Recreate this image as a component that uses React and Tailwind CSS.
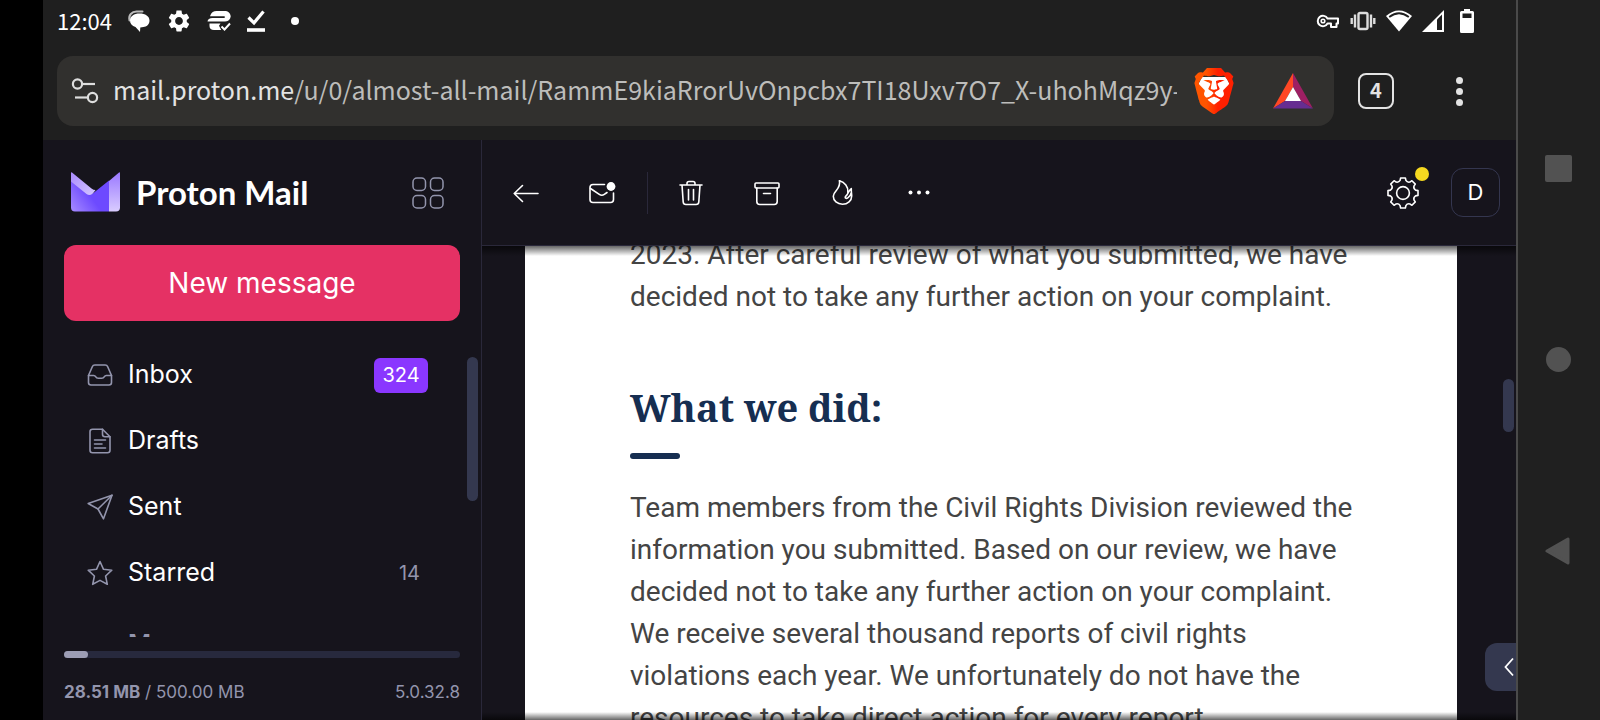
// Webmail conversation view inside a landscape mobile browser
import { SiBrave } from 'react-icons/si';

/* ---------- Status bar icons ---------- */

const ChatIcon = () => (
    <svg width="24" height="24" viewBox="0 0 24 24" fill="none">
        <path d="M2.500 11.500C1.200 6 5 2.600 9.500 2.600h6" stroke="#bbb" strokeWidth="2" strokeLinecap="round" />
        <path d="M12.500 4.500c5.800 0 10 2.700 10 7s-3 6-6 6.600l-3.200.4-.3 4.500-4.500-5C5 17 3 14.800 3 11.500c0-4.300 4-7 9.500-7z" fill="#fff" />
    </svg>
);

const CogFilledIcon = () => (
    <svg width="26" height="26" viewBox="0 0 24 24" fill="#fff">
        <path d="M19.140 12.940c.04-.3.060-.61.060-.94 0-.32-.02-.64-.07-.94l2.030-1.580c.18-.14.230-.41.120-.61l-1.920-3.320c-.12-.22-.37-.29-.59-.22l-2.390.960c-.5-.38-1.030-.7-1.620-.94L14.400 2.810c-.04-.24-.24-.41-.48-.41h-3.840c-.24 0-.43.170-.47.410L9.250 5.350C8.660 5.590 8.120 5.920 7.630 6.290L5.240 5.330c-.22-.08-.47 0-.59.220L2.740 8.870c-.12.210-.08.470.120.610l2.030 1.580c-.05.3-.09.630-.09.940s.02.640.070.940l-2.030 1.580c-.18.140-.23.410-.12.610l1.920 3.320c.12.220.370.290.590.220l2.390-.96c.5.380 1.030.7 1.620.940l.360 2.540c.05.240.240.410.480.410h3.840c.24 0 .44-.17.470-.41l.360-2.540c.59-.24 1.130-.56 1.620-.94l2.390.960c.22.080.470 0 .59-.22l1.920-3.320c.12-.22.070-.47-.12-.61l-2.010-1.580zM12 15.600c-1.980 0-3.600-1.620-3.600-3.600s1.620-3.600 3.600-3.600 3.600 1.620 3.600 3.600-1.620 3.600-3.600 3.600z" />
    </svg>
);

const NewsIcon = () => (
    <svg width="24" height="22" viewBox="0 0 24 22" fill="#fff">
        <path d="M3.500 5C4.500 2.500 6.500 1 9.500 1h8c3.600 0 6 2 6.200 5.500l-.6 2c-1 2-2.600 3-5.100 3H.5C.8 9.400 2.500 8 5.500 8h12.200V6.200H3z" />
        <path d="M2.500 13.500h11l-1.500 2.200 2.200 4.300H7c-2.800 0-4.500-1.600-4.500-4z" />
        <path d="M14.500 16.500l3 3 5.500-6" fill="none" stroke="#fff" strokeWidth="2" />
    </svg>
);

const DownloadDoneIcon = () => (
    <svg width="20" height="24" viewBox="0 0 20 24" fill="none" stroke="#fff">
        <path d="M2.500 8.500l5.500 5.300L17.500 2.500" strokeWidth="3.200" />
        <path d="M1 21h18" strokeWidth="3.600" />
    </svg>
);

const KeyIcon = () => (
    <svg width="24" height="16" viewBox="0 0 24 16" fill="none" stroke="#fff" strokeWidth="2">
        <path d="M11.500 5.500H22v5h-1.500V14H15v-3.500h-3.500A5.200 5.200 0 1 1 11.500 5.500z" strokeLinejoin="round" />
        <circle cx="7" cy="8" r="1.800" strokeWidth="1.600" />
    </svg>
);

const VibrateIcon = () => (
    <svg width="26" height="20" viewBox="0 0 26 20" fill="none" stroke="#ddd" strokeWidth="2.400">
        <rect x="8.500" y="2" width="9" height="16" rx="1.500" />
        <path d="M5 3.500v13M21 3.500v13M1.700 7v6M24.300 7v6" />
    </svg>
);

const WifiIcon = () => (
    <svg width="26" height="22" viewBox="0 0 26 22" fill="none">
        <path d="M0 6C8-1.500 18-1.500 26 6L13 21.500z" fill="#fff" />
        <path d="M3.200 7C9.500 2.200 16.500 2.200 22.800 7" stroke="#1f1f1f" strokeWidth="1.800" />
    </svg>
);

const SignalIcon = () => (
    <svg width="22" height="22" viewBox="0 0 22 22">
        <path d="M22 0v22H0z" fill="#fff" />
        <path d="M15 9.500l5-5V20h-5z" fill="#1f1f1f" />
    </svg>
);

const BatteryIcon = () => (
    <svg width="14" height="24" viewBox="0 0 14 24">
        <path d="M4 0h6v2h2.500A1.500 1.500 0 0 1 14 3.500v19a1.500 1.500 0 0 1-1.500 1.500h-11A1.500 1.500 0 0 1 0 22.500v-19A1.500 1.500 0 0 1 1.500 2H4z" fill="#fff" />
        <path d="M2.500 4.500h9V9h-9z" fill="#1f1f1f" />
    </svg>
);

/* ---------- Browser icons ---------- */

const SiteSettingsIcon = () => (
    <svg width="28" height="26" viewBox="0 0 28 26" fill="none" stroke="#dedede" strokeWidth="2.200">
        <circle cx="6.500" cy="6" r="4.600" />
        <path d="M11 6h13" />
        <circle cx="21.500" cy="19.500" r="4.600" />
        <path d="M17 19.500H4" />
    </svg>
);

const BraveIcon = () => (
    <svg width="46" height="46" viewBox="0 0 46 46">
        <defs>
            <linearGradient id="brave" x1="0" x2="1">
                <stop offset="0.300" stopColor="#ff5500" />
                <stop offset="0.600" stopColor="#ff2000" />
            </linearGradient>
        </defs>
        <path d="M11 9h24l4 8-5 19-11 7-11-7-5-19z" fill="#fff" />
        <SiBrave size={46} fill="url(#brave)" />
    </svg>
);

const BatIcon = () => (
    <svg width="40" height="36" viewBox="0 0 40 36">
        <path d="M20 0v14l-8 14L0 35.500z" fill="#ff4724" />
        <path d="M20 0v14l8 14 12 7.500z" fill="#9e1f63" />
        <path d="M0 35.500L12 28h16l12 7.500z" fill="#662d91" />
        <path d="M20 14l8 14H12z" fill="#fff" />
    </svg>
);

/* ---------- Mail icons ---------- */

const ProtonLogo = () => (
    <svg width="49" height="40" viewBox="0 0 49 40">
        <defs>
            <linearGradient id="flap" x1="0" y1="0" x2="1" y2="1">
                <stop offset="0" stopColor="#a98aff" />
                <stop offset="1" stopColor="#d6c9ff" />
            </linearGradient>
            <linearGradient id="side" x1="0" y1="0" x2="0" y2="1">
                <stop offset="0" stopColor="#9a78ff" />
                <stop offset="1" stopColor="#d9ccff" />
            </linearGradient>
            <linearGradient id="body" x1="0" y1="1" x2="1" y2="0.400">
                <stop offset="0" stopColor="#a78bff" />
                <stop offset="0.600" stopColor="#6d4aff" />
            </linearGradient>
        </defs>
        <path d="M38 9L48 .5q1-.8 1 .5v34.500a4 4 0 0 1-4 4h-7z" fill="url(#side)" />
        <path d="M0 1Q0-.3 1 .5L20.500 16.500q2 1.500 4 1.500L20 24l-6 1L0 12z" fill="url(#flap)" />
        <path d="M0 9.500l15.500 12.500q3 2.200 6-.3L38 8.500v31H4a4 4 0 0 1-4-4z" fill="url(#body)" />
    </svg>
);

const AppsIcon = () => (
    <svg width="32" height="32" viewBox="0 0 32 32" fill="none" stroke="#9395ad" strokeWidth="1.500">
        <rect x="1" y="1" width="12.500" height="12.500" rx="4" />
        <rect x="18.500" y="1" width="12.500" height="12.500" rx="4" />
        <rect x="1" y="18.500" width="12.500" height="12.500" rx="4" />
        <rect x="18.500" y="18.500" width="12.500" height="12.500" rx="4" />
    </svg>
);

const NavIcon = ({ children }) => (
    <svg width="26" height="26" viewBox="0 0 26 26" fill="none" stroke="#9395ad" strokeWidth="1.600" strokeLinejoin="round" strokeLinecap="round" className="shrink-0">
        {children}
    </svg>
);

const InboxIcon = () => (
    <NavIcon>
        <path d="M1.500 13.500L5.300 4.700Q6 3 7.800 3h10.400q1.800 0 2.500 1.700l3.800 8.800v7q0 2.500-2.500 2.500H4q-2.500 0-2.500-2.500z" />
        <path d="M1.500 13.500h5.200q1.300 0 1.900 1.100.9 1.700 2.700 1.700h3.400q1.800 0 2.700-1.700.6-1.100 1.900-1.100h5.200" />
    </NavIcon>
);

const DraftsIcon = () => (
    <NavIcon>
        <path d="M15.500 1.200H5.500q-2.500 0-2.500 2.500v18.600q0 2.500 2.500 2.500h15q2.500 0 2.500-2.500V8.700z" />
        <path d="M15.500 1.200v5q0 2.500 2.500 2.500h5M7.500 12h11M7.500 16h7.500M7.500 20h11" />
    </NavIcon>
);

const SentIcon = () => (
    <NavIcon>
        <path d="M25 1.200L1.200 9.500l9.800 5.500L16.500 24.800z" />
        <path d="M25 1.200L11 15" />
    </NavIcon>
);

const StarIcon = () => (
    <NavIcon>
        <path d="M13 1.500l3.500 7.800 8.300.9-6.200 5.800 1.700 8.300L13 20.400l-7.300 3.900L7.400 16 1.200 10.200l8.300-.9z" />
    </NavIcon>
);

const ChevronSmall = () => (
    <NavIcon>
        <path d="M10.500 7l5 6-5 6" />
    </NavIcon>
);

const ToolIcon = ({ children }) => (
    <svg width="28" height="28" viewBox="0 0 28 28" fill="none" stroke="#fff" strokeWidth="1.600" strokeLinejoin="round" strokeLinecap="round">
        {children}
    </svg>
);

const BackIcon = () => (
    <ToolIcon>
        <path d="M26 14.500H2.200M10.500 6.500l-8.300 8 8.300 8" />
    </ToolIcon>
);

const UnreadIcon = () => (
    <ToolIcon>
        <path d="M16.500 5.500H5q-3 0-3 3v12q0 3 3 3h17.500q3 0 3-3V14" />
        <path d="M2.500 9.500l8.800 5.900q2.500 1.700 5 0l2.700-1.900" />
        <circle cx="23" cy="7.500" r="4.400" fill="#fff" stroke="none" />
    </ToolIcon>
);

const TrashIcon = () => (
    <ToolIcon>
        <path d="M3 6h22M10 6V4.500Q10 2.500 12 2.500h4q2 0 2 2V6M5 6l1.200 17q.2 2.500 2.700 2.500h10.200q2.500 0 2.700-2.500L23 6" />
        <path d="M11.500 10.500v10.500M16.500 10.500v10.500" />
    </ToolIcon>
);

const ArchiveIcon = () => (
    <ToolIcon>
        <rect x="2" y="4" width="24" height="5" rx="1" />
        <path d="M3.800 9v13.500q0 3 3 3h14.400q3 0 3-3V9M10.500 14.500h7" />
    </ToolIcon>
);

const FlameIcon = () => (
    <ToolIcon>
        <path d="M10.500 1.800c.8 4.600-.8 6.800-3.200 9.600C5.200 13.800 4.300 15.400 4.300 17.200c0 4.600 4 8 9.200 8s9.200-3.600 9.200-8.200c0-2.600-.6-4.400-.4-7.400-2 1.600-3 3.300-3.800 5.400-.6 1.500-2.300 2-2.300 3.300 0 1.100 1.300 1.400 2.600.6 1.900-1.200 3-2.900 3.600-5.400" />
        <path d="M10.500 1.800c5.200 1.600 9 5.900 8.300 11.500" />
    </ToolIcon>
);

const MoreIcon = () => (
    <ToolIcon>
        <g fill="#fff" stroke="none">
            <circle cx="5.500" cy="13.500" r="2" />
            <circle cx="14" cy="13.500" r="2" />
            <circle cx="22.500" cy="13.500" r="2" />
        </g>
    </ToolIcon>
);

// Eight flat teeth joined by rounded valleys
const point = (radius, degrees) => {
    const a = (degrees * Math.PI) / 180;
    return `${(radius * Math.cos(a)).toFixed(2)} ${(radius * Math.sin(a)).toFixed(2)}`;
};

const gearPath = Array.from({ length: 8 }, (_, i) => {
    const a = i * 45;
    return `${i ? 'L' : 'M'}${point(15.2, a - 9)}L${point(15.2, a + 9)}L${point(12.9, a + 13)}Q${point(11.2, a + 22.5)} ${point(12.9, a + 32)}`;
}).join('') + 'Z';

const GearIcon = () => (
    <svg width="32" height="32" viewBox="-16 -16 32 32" fill="none" stroke="#fff" strokeWidth="1.600" strokeLinejoin="round">
        <path d={gearPath} />
        <circle r="6.400" />
    </svg>
);

/* ---------- Data ---------- */

const folders = [
    { label: 'Inbox', icon: InboxIcon, count: 324, unread: true },
    { label: 'Drafts', icon: DraftsIcon },
    { label: 'Sent', icon: SentIcon },
    { label: 'Starred', icon: StarIcon, count: 14 },
];

const actions = [
    { label: 'Move to trash', icon: TrashIcon },
    { label: 'Archive', icon: ArchiveIcon },
    { label: 'Move to spam', icon: FlameIcon },
    { label: 'More', icon: MoreIcon },
];

const storage = { used: 28.51, total: 500 };

/* ---------- Sections ---------- */

const StatusBar = () => (
    <div className="flex h-[42px] items-center justify-between pr-[42px] pl-3.5">
        <div className="flex items-center gap-[15px]">
            <span className="pb-0.5 text-[22px] leading-6 text-white">12:04</span>
            <ChatIcon />
            <CogFilledIcon />
            <NewsIcon />
            <DownloadDoneIcon />
            <span className="ml-2.5 size-2 rounded-full bg-white" />
        </div>
        <div className="flex items-center gap-2.5">
            <KeyIcon />
            <VibrateIcon />
            <WifiIcon />
            <SignalIcon />
            <span className="ml-1.5"><BatteryIcon /></span>
        </div>
    </div>
);

const AddressBar = () => (
    <div className="flex items-center py-3.5 pl-3.5">
        <div className="flex h-[70px] min-w-0 flex-1 items-center rounded-2xl bg-[#31302e] pr-[21px] pl-3.5">
            <button aria-label="Site settings" className="shrink-0">
                <SiteSettingsIcon />
            </button>
            <button className="ml-3.5 min-w-0 flex-1 overflow-hidden pb-1 text-left text-[25px] leading-10 whitespace-nowrap text-[#bdbdbb]">
                <span className="text-[#e3e3e3]">mail.proton.me</span>/u/0/almost-all-mail/RammE9kiaRrorUvOnpcbx7TI18Uxv7O7_X-uhohMqz9y-
            </button>
            <button aria-label="Brave Shields" className="ml-3.5 shrink-0">
                <BraveIcon />
            </button>
            <button aria-label="Brave Rewards" className="ml-9 shrink-0">
                <BatIcon />
            </button>
        </div>
        <div className="flex w-[182px] shrink-0 items-center pl-6">
            <button aria-label="Tabs" className="flex size-9 items-center justify-center rounded-lg border-2 border-[#e3e3e3] pb-0.5 text-xl font-bold text-[#e3e3e3]">
                4
            </button>
            <button aria-label="Menu" className="ml-[62px] flex flex-col gap-1">
                <span className="size-[7px] rounded-full bg-[#e3e3e3]" />
                <span className="size-[7px] rounded-full bg-[#e3e3e3]" />
                <span className="size-[7px] rounded-full bg-[#e3e3e3]" />
            </button>
        </div>
    </div>
);

const Sidebar = () => (
    <aside className="relative flex w-[439px] shrink-0 flex-col border-r border-[#2a283a] px-[21px]">
        <div className="flex h-[105px] shrink-0 items-center pr-4 pl-[7px]">
            <a href="#inbox" className="flex items-center gap-4 pb-0.5">
                <ProtonLogo />
                <span className="font-['Lato',sans-serif] text-[33px] leading-10 font-bold text-white">Proton Mail</span>
            </a>
            <button aria-label="Proton apps" className="ml-auto">
                <AppsIcon />
            </button>
        </div>

        <button className="h-[76px] shrink-0 rounded-xl bg-[#e53164] text-[28px] text-white">
            New message
        </button>

        <nav className="mt-[21px] min-h-0 flex-1 overflow-hidden pr-8 pl-[23px]">
            {folders.map(({ label, icon: Icon, count, unread }) => (
                <a key={label} href={`#${label.toLowerCase()}`} className="flex h-[66px] items-center text-[25px] text-white">
                    <Icon />
                    <span className="ml-[15px]">{label}</span>
                    {count && (
                        <span className={unread
                            ? 'ml-auto w-[54px] rounded-md bg-[#8a37ff] text-center text-xl leading-[35px] text-white'
                            : 'ml-auto px-2 text-xl leading-[35px] text-[#9395ad]'}
                        >
                            {count}
                        </span>
                    )}
                </a>
            ))}
            <button className="mt-1.5 flex h-[66px] items-center text-[25px] font-semibold text-[#9395ad]">
                <ChevronSmall />
                <span className="ml-[15px]">More</span>
            </button>
        </nav>

        <div className="h-[83px] shrink-0 pt-3.5 text-[#9395ad]">
            <div className="h-[7px] rounded-full bg-[#27293d]">
                <div className="h-full rounded-full bg-[#9c9db4]" style={{ width: `${(storage.used / storage.total) * 106}%` }} />
            </div>
            <div className="mt-5 flex justify-between text-[17px] leading-7">
                <span><b>{storage.used} MB</b> / {storage.total.toFixed(2)} MB</span>
                <span>5.0.32.8</span>
            </div>
        </div>

        {/* Scroll thumb */}
        <div className="absolute top-[217px] right-[3px] h-36 w-[11px] rounded-full bg-[#34384f]" />
    </aside>
);

const Toolbar = () => (
    <div className="flex h-[106px] shrink-0 items-center border-b border-[#2a283a] pr-4 pl-1.5">
        <button aria-label="Back" className="flex w-[76px] justify-center">
            <BackIcon />
        </button>
        <button aria-label="Mark as unread" className="flex w-[76px] justify-center">
            <UnreadIcon />
        </button>
        <span className="mr-[5px] ml-[7px] h-[42px] w-px bg-[#2a283a]" />
        {actions.map(({ label, icon: Icon }) => (
            <button key={label} aria-label={label} className="flex w-[76px] justify-center">
                <Icon />
            </button>
        ))}
        <button aria-label="Settings" className="relative ml-auto">
            <GearIcon />
            <span className="absolute -top-2.5 -right-2.5 size-3.5 rounded-full bg-[#f6d920]" />
        </button>
        <button aria-label="Account" className="ml-8 size-[49px] rounded-xl border border-[#34364f] text-[22px] text-white">
            D
        </button>
    </div>
);

const Message = () => (
    <div className="relative min-h-0 flex-1 overflow-hidden pr-[59px] pl-[43px]">
        <article className="bg-white pr-[95px] pb-10 pl-[105px] font-['Roboto',sans-serif] text-[28px] leading-[42px] text-[#444]">
            <div className="-mt-3">
                <p>2023. After careful review of what you submitted, we have decided not to take any further action on your complaint.</p>
                <h2 className="mt-[61px] font-['Noto_Serif','DejaVu_Serif',serif] text-[38px] leading-[56px] font-bold text-[#162e51]">
                    What we did:
                </h2>
                <div className="mt-[18px] h-1.5 w-[50px] rounded-full bg-[#162e51]" />
                <p className="mt-7">
                    Team members from the Civil Rights Division reviewed the information you submitted. Based on our review, we have decided not to take any further action on your complaint. We receive several thousand reports of civil rights violations each year. We unfortunately do not have the resources to take direct action for every report.
                </p>
            </div>
        </article>

        {/* Scroll shadows */}
        <div className="absolute inset-x-0 top-0 h-2.5 bg-linear-to-b from-black/60 to-transparent" />
        <div className="absolute inset-x-0 bottom-0 h-2 bg-linear-to-t from-black/60 to-transparent" />

        <div className="absolute top-[133px] right-0.5 h-[53px] w-[11px] rounded-full bg-[#34384f]" />
        <button aria-label="Show side panel" className="absolute right-0 bottom-[29px] flex h-12 w-[31px] items-center justify-end rounded-l-xl bg-[#34384f] pr-0.5">
            <svg width="10" height="20" viewBox="0 0 10 20" fill="none" stroke="#fff" strokeWidth="1.800">
                <path d="M9 1.500L1.500 10 9 18.500" />
            </svg>
        </button>
    </div>
);

const SystemNav = () => (
    <div className="flex w-[84px] shrink-0 flex-col border-l-2 border-[#4a4a4a] bg-[#202020] py-[73px] pr-0.5">
        <button aria-label="Recents" className="flex flex-1 items-center justify-center">
            <span className="size-[27px] rounded-xs bg-[#525252]" />
        </button>
        <button aria-label="Home" className="flex flex-1 items-center justify-center">
            <span className="size-[25px] rounded-full bg-[#525252]" />
        </button>
        <button aria-label="Back" className="flex flex-1 items-center justify-center">
            <svg width="26" height="28" viewBox="0 0 26 28">
                <path d="M2 14L23 2v24z" fill="#525252" stroke="#525252" strokeWidth="3" strokeLinejoin="round" />
            </svg>
        </button>
    </div>
);

const App = () => (
    <div className="flex h-screen overflow-hidden bg-black pl-[43px] font-['Inter',sans-serif]">
        <div className="flex min-w-0 flex-1 flex-col bg-[#16141c]">
            <header className="shrink-0 bg-[#1f1f1f] font-['Noto_Sans_CJK_SC',sans-serif]">
                <StatusBar />
                <AddressBar />
            </header>
            <div className="flex min-h-0 flex-1">
                <Sidebar />
                <main className="flex min-w-0 flex-1 flex-col">
                    <Toolbar />
                    <Message />
                </main>
            </div>
        </div>
        <SystemNav />
    </div>
);

export default App;
